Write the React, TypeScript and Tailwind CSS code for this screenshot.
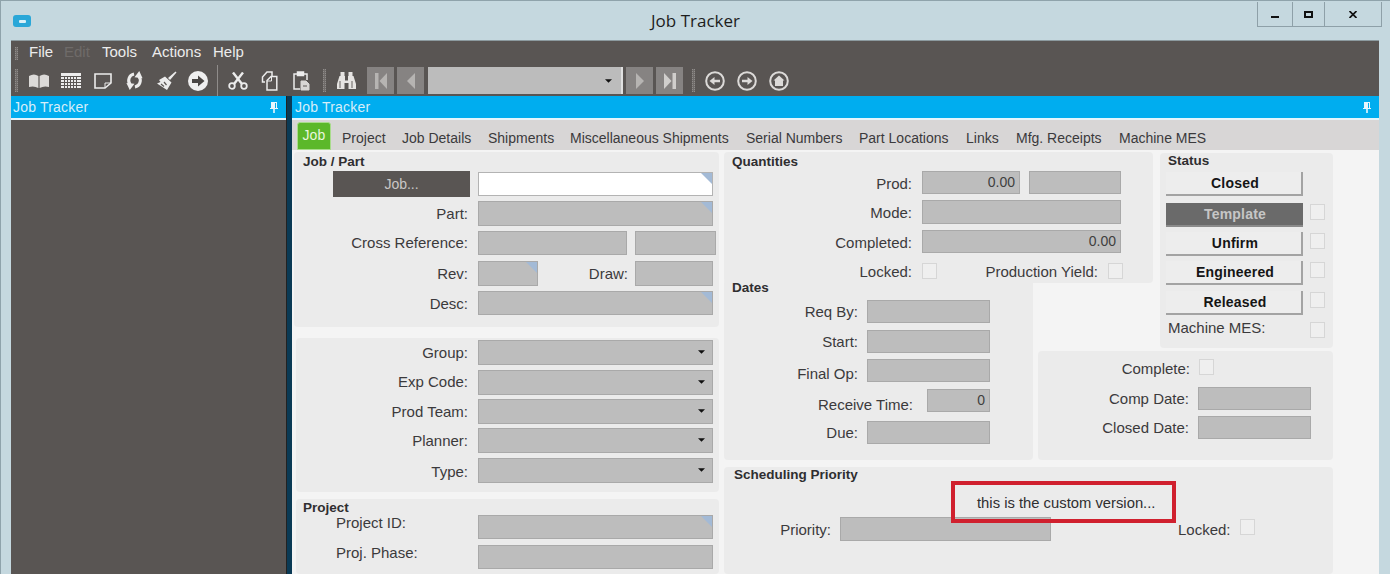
import React from "react";

const Label = ({ w, children, cls = "" }: { w: string; children: React.ReactNode; cls?: string }) => (
  <span className={`${w} ${cls} shrink-0 text-right whitespace-nowrap text-[15px] leading-none text-[#3b3a3c]`}>{children}</span>
);

const Corner = () => (
  <svg viewBox="0 0 10 10" className="absolute right-0 top-0 w-[11px] h-[11px]">
    <polygon points="0,0 10,0 10,10" fill="#a3bad6" />
  </svg>
);

const Field = ({
  w,
  h = "h-[24px]",
  ml = "ml-[10px]",
  corner,
  value,
  drop,
}: {
  w: string;
  h?: string;
  ml?: string;
  corner?: boolean;
  value?: string;
  drop?: boolean;
}) => (
  <div className={`${w} ${h} ${ml} relative shrink-0 bg-[#bdbdbd] border border-[#a9a9a9] flex items-center justify-end pr-[4px] text-[14px] text-[#3f3f3f]`}>
    {value}
    {corner && <Corner />}
    {drop && (
      <svg viewBox="0 0 8 4" className="w-[7px] h-[4px] mr-[3px]">
        <polygon points="0,0 8,0 4,4" fill="#111" />
      </svg>
    )}
  </div>
);

const Check = ({ ml = "ml-[10px]", cls = "" }: { ml?: string; cls?: string }) => (
  <div className={`${ml} ${cls} w-[15px] h-[16px] shrink-0 bg-[#efefef] border border-[#d6d6d6]`} />
);

const Panel = ({ cls, children }: { cls: string; children: React.ReactNode }) => (
  <div className={`${cls} bg-[#ebebeb] rounded-[4px]`}>{children}</div>
);

const Title = ({ children, cls = "" }: { children: React.ReactNode; cls?: string }) => (
  <div className={`${cls} font-bold text-[13.5px] leading-none text-[#2f2e30] whitespace-nowrap`}>{children}</div>
);

const Grip = ({ cls }: { cls: string }) => (
  <div className={`${cls} w-[3px] shrink-0 border-x border-dotted border-[#8f8c8a] bg-[#6f6b69]`} />
);

const I = "#ececec";

const Book = () => (
  <svg viewBox="0 0 20 15" className="ml-[11px] w-[20px] h-[15px] shrink-0">
    <path d="M0 3 Q5 0 9.4 3 V15 Q5 12.5 0 14Z M10.6 3 Q15 0 20 3 V14 Q15 12.5 10.6 15Z" fill="#dcdad8" />
  </svg>
);
const Calendar = () => (
  <svg viewBox="0 0 20 15" className="ml-[12px] w-[20px] h-[15px] shrink-0">
    <rect width="20" height="15" fill={I} />
    <g stroke="#5a5654" strokeWidth="1">
      <path d="M0 3.5H20M0 6.5H20M0 9.5H20M0 12.5H20M3.5 3V15M6.5 3V15M9.5 3V15M12.5 3V15M15.5 3V15" />
    </g>
  </svg>
);
const Note = () => (
  <svg viewBox="0 0 18 16" className="ml-[13px] w-[18px] h-[16px] shrink-0" fill="none" stroke={I} strokeWidth="1.6">
    <path d="M1 1H17V10L11 15H1Z" />
    <path d="M11 15V10H17" strokeWidth="1" />
  </svg>
);
const Refresh = () => (
  <svg viewBox="0 0 20 20" className="ml-[13px] w-[19px] h-[19px] shrink-0" fill="none" stroke={I} strokeWidth="3.2">
    <path d="M9.5 3.2A7 7 0 0 0 5.5 14.5" />
    <path d="M14.5 5.5A7 7 0 0 1 10.5 16.8" />
    <path d="M1.5 12.5L10 13.5L5 20Z M10 6.5L18.5 7.5L15 0Z" fill={I} stroke="none" />
  </svg>
);
const Broom = () => (
  <svg viewBox="0 0 21 20" className="ml-[12px] w-[21px] h-[20px] shrink-0">
    <path d="M12 7L19.5 0.5L20.5 1.5L14 9Z" fill={I} />
    <path d="M9 5.5L15.5 11.5L11 19L1 12.5L4.5 11L3 9Z" fill={I} />
    <path d="M5 13L8 15.5M8 11L10.5 14" stroke="#5a5654" strokeWidth="1.2" />
  </svg>
);
const ArrowCircle = () => (
  <svg viewBox="0 0 20 20" className="ml-[11px] w-[20px] h-[20px] shrink-0">
    <circle cx="10" cy="10" r="10" fill="#efefef" />
    <path d="M4 8H10V4.5L16.5 10L10 15.5V12H4Z" fill="#494644" />
  </svg>
);
const Scissors = () => (
  <svg viewBox="0 0 20 18" className="ml-[10px] w-[20px] h-[18px] shrink-0" fill="none" stroke={I}>
    <circle cx="4" cy="14" r="2.8" strokeWidth="1.8" />
    <circle cx="16" cy="14" r="2.8" strokeWidth="1.8" />
    <path d="M6 12L15 0.5M14 12L5 0.5" strokeWidth="2.4" />
  </svg>
);
const Copy = () => (
  <svg viewBox="0 0 17 20" className="ml-[13px] w-[17px] h-[20px] shrink-0" fill="none" stroke={I} strokeWidth="1.5">
    <path d="M4 11H1.5V6L6 1H11V5" />
    <path d="M6 9.5L10 5.5H15.8V19H6Z" />
    <path d="M6 10H10.5V5.5" strokeWidth="1" />
  </svg>
);
const Paste = () => (
  <svg viewBox="0 0 17 20" className="ml-[15px] w-[17px] h-[20px] shrink-0" fill="none" stroke={I} strokeWidth="1.5">
    <path d="M7 18H1V3H14V9" />
    <rect x="4.5" y="1" width="6" height="3.5" fill={I} />
    <path d="M8 10H13L16 13V19H8Z" fill="#d8d6d4" stroke="#d8d6d4" strokeWidth="1" />
    <path d="M10 15H14" stroke="#5a5654" strokeWidth="1" />
  </svg>
);
const Binoculars = () => (
  <svg viewBox="0 0 19 17" className="ml-[11px] w-[19px] h-[17px] shrink-0">
    <path d="M3.5 0H7.5V4H8V8.5H11V4H11.5V0H15.5V4H16.5L19 12V17H11.5V11H7.5V17H0V12L2.5 4H3.5Z" fill="#e6e4e2" />
    <path d="M3 9V16M15 9V16" stroke="#8b8886" strokeWidth="1.4" />
  </svg>
);

const NavBtn = ({ ml, kind }: { ml: string; kind: "first" | "prev" | "next" | "last" }) => (
  <div className={`${ml} w-[27px] h-[27px] shrink-0 bg-[#868382] flex items-center justify-center`}>
    <svg viewBox="0 0 14 16" className="w-[14px] h-[16px]">
      {kind === "first" && <path d="M1 0H4.5V16H1Z M13 0V16L5.5 8Z" fill="#b6b4b2" />}
      {kind === "prev" && <path d="M11 0V16L3 8Z" fill="#b6b4b2" />}
      {kind === "next" && <path d="M3 0V16L11 8Z" fill="#b6b4b2" />}
      {kind === "last" && <path d="M1 0V16L8.5 8Z M9.5 0H13V16H9.5Z" fill="#d0cecc" />}
    </svg>
  </div>
);

const CircleNav = ({ ml, children }: { ml: string; children: React.ReactNode }) => (
  <svg viewBox="0 0 20 20" className={`${ml} w-[20px] h-[20px] shrink-0`}>
    <circle cx="10" cy="10" r="8.8" fill="none" stroke="#dcdad8" strokeWidth="2" />
    {children}
  </svg>
);

const Pin = ({ cls = "" }: { cls?: string }) => (
  <svg viewBox="0 0 8 11" className={`${cls} w-[8px] h-[11px] shrink-0`}>
    <path d="M1 0H7V6H8V7H4.8V11H3.2V7H0V6H1Z M5 1V6H6V1Z" fill="#e6f6fd" fillRule="evenodd" />
  </svg>
);

const StatusBtn = ({ label, active }: { label: string; active?: boolean }) =>
  active ? (
    <div className="w-[137px] h-[24px] pl-[1px] bg-[#6a6a6a] border-b-2 border-[#8a8a8a] flex items-center justify-center font-bold text-[14px] tracking-[0.2px] text-[#c6c6c6]">
      {label}
    </div>
  ) : (
    <div className="w-[137px] h-[24px] pl-[3px] pt-[1px] bg-[#ededed] border-r-2 border-b-2 border-[#a3a3a3] flex items-center justify-center font-bold text-[14px] tracking-[0.2px] text-[#151515]">
      {label}
    </div>
  );

const tabs = [
  ["Project", "w-[60px]"],
  ["Job Details", "w-[86px]"],
  ["Shipments", "w-[82px]"],
  ["Miscellaneous Shipments", "w-[176px]"],
  ["Serial Numbers", "w-[113px]"],
  ["Part Locations", "w-[107px]"],
  ["Links", "w-[50px]"],
  ["Mfg. Receipts", "w-[103px]"],
  ["Machine MES", "w-[90px]"],
];

const menu = [
  ["File", "w-[35px]", "text-[#ececec]"],
  ["Edit", "w-[38px]", "text-[#6f6b69]"],
  ["Tools", "w-[50px]", "text-[#ececec]"],
  ["Actions", "w-[61px]", "text-[#ececec]"],
  ["Help", "w-[40px]", "text-[#ececec]"],
];

const selects = [
  ["Group:", "mt-[2px]", ""],
  ["Exp Code:", "mt-[5.5px]", "-mt-[2px]"],
  ["Prod Team:", "mt-[4.5px]", ""],
  ["Planner:", "mt-[4.5px]", ""],
  ["Type:", "mt-[5.5px]", "mt-[2px]"],
];

export default function App() {
  return (
    <div className="w-[1390px] h-[574px] overflow-hidden bg-[#c5d8df] border-t border-l border-[#8fa3ab] font-['Liberation_Sans',sans-serif] flex flex-col">
      {/* Title bar */}
      <div className="h-[39px] shrink-0 relative flex items-center justify-center">
        <div className="absolute left-[12px] top-[14px] w-[18px] h-[12px] rounded-[3px] bg-[#2aa7d8] flex items-center justify-center">
          <div className="w-[7px] h-[3px] rounded-[1px] bg-[#d9f0f8]" />
        </div>
        <span className="font-['Open_Sans',sans-serif] text-[17px] text-[#1d1d1d] mt-[1px]">Job Tracker</span>
        <div className="absolute left-[1256px] top-[1px] w-[125px] h-[25px] flex border-x border-b border-[#8ea0a8] text-[#111]">
          <div className="w-[35px] flex items-center justify-center border-r border-[#8ea0a8]">
            <div className="w-[8px] h-[2px] bg-[#111] mt-[5px]" />
          </div>
          <div className="w-[32px] flex items-center justify-center border-r border-[#8ea0a8]">
            <div className="w-[9px] h-[7px] border-2 border-[#111]" />
          </div>
          <div className="flex-1 flex items-center justify-center">
            <svg viewBox="0 0 8 7" className="w-[8px] h-[7px]">
              <path d="M0.5 0L7.5 7M7.5 0L0.5 7" stroke="#111" strokeWidth="1.7" />
            </svg>
          </div>
        </div>
      </div>

      <div className="ml-[10px] w-[1368px] flex-1 min-h-0 flex flex-col">
        {/* Menu bar */}
        <div className="h-[25px] shrink-0 bg-[#595553] flex items-center border-t border-[#8c9a9f]">
          <Grip cls="ml-[4px] h-[13px]" />
          <div className="ml-[11px] -mt-[3px] flex text-[15px] leading-none">
            {menu.map(([t, w, c]) => (
              <span key={t} className={`${w} ${c}`}>
                {t}
              </span>
            ))}
          </div>
        </div>

        {/* Toolbar */}
        <div className="h-[31px] shrink-0 bg-[#595553] flex items-center">
          <Grip cls="ml-[4px] h-[23px]" />
          <Book />
          <Calendar />
          <Note />
          <Refresh />
          <Broom />
          <ArrowCircle />
          <div className="ml-[9px] w-[1px] h-[31px] bg-[#8f8c8a] shrink-0" />
          <Scissors />
          <Copy />
          <Paste />
          <Grip cls="ml-[13px] h-[23px]" />
          <Binoculars />
          <NavBtn ml="ml-[11px]" kind="first" />
          <NavBtn ml="ml-[3px]" kind="prev" />
          <div className="ml-[4px] w-[195px] h-[27px] shrink-0 bg-[#bcbcbc] border-r-2 border-[#e0e0e0] flex items-center justify-end pr-[9px]">
            <svg viewBox="0 0 8 4" className="w-[7px] h-[4px]">
              <polygon points="0,0 8,0 4,4" fill="#111" />
            </svg>
          </div>
          <NavBtn ml="ml-[3px]" kind="next" />
          <NavBtn ml="ml-[3px]" kind="last" />
          <Grip cls="ml-[9px] h-[23px]" />
          <CircleNav ml="ml-[10px]">
            <path d="M15 8.7H9.5V6L4.5 10L9.5 14V11.3H15Z" fill="#dcdad8" />
          </CircleNav>
          <CircleNav ml="ml-[12px]">
            <path d="M5 8.7H10.5V6L15.5 10L10.5 14V11.3H5Z" fill="#dcdad8" />
          </CircleNav>
          <CircleNav ml="ml-[12px]">
            <path d="M10 4.5L15.5 9.5H14V15H6V9.5H4.5Z" fill="#dcdad8" />
          </CircleNav>
        </div>

        {/* Docked panes */}
        <div className="flex-1 min-h-0 flex">
          {/* Left pane */}
          <div className="w-[275px] shrink-0 flex flex-col bg-[#595553]">
            <div className="h-[24px] shrink-0 bg-[#00adef] border-b-2 border-[#e4f5fc] flex items-center pl-[2px] pr-[8px] justify-between">
              <span className="text-[14px] tracking-[0.2px] text-[#d6eef9]">Job Tracker</span>
              <Pin />
            </div>
          </div>
          <div className="w-[6px] shrink-0 bg-[#0a3a55] border-l border-[#222]" />

          {/* Right pane */}
          <div className="flex-1 min-w-0 flex flex-col bg-[#f4f4f4]">
            <div className="h-[24px] shrink-0 bg-[#00adef] border-b-2 border-[#e4f5fc] flex items-center pl-[3px] pr-[8px] justify-between">
              <span className="text-[14px] tracking-[0.2px] text-[#d6eef9]">Job Tracker</span>
              <Pin />
            </div>

            {/* Tabs */}
            <div className="h-[30px] shrink-0 bg-[#d8d6d6] flex items-end pl-[5px]">
              <div className="w-[34px] h-[28px] pb-[2px] rounded-t-[3px] bg-[#5cb82a] border border-[#a9dc8c] flex items-center justify-center text-[14px] text-[#e8f6de] tracking-[0.2px]">
                Job
              </div>
              <div className="ml-[11px] h-[28px] pt-[4px] flex items-center text-[14px] text-[#3b3a3c]">
                {tabs.map(([t, w]) => (
                  <span key={t} className={`${w} whitespace-nowrap`}>
                    {t}
                  </span>
                ))}
              </div>
            </div>

            {/* Form */}
            <div className="flex-1 min-h-0 flex pl-[2px] pt-[2px]">
              {/* Left column */}
              <div className="w-[425px] shrink-0 flex flex-col">
                <Panel cls="h-[175px] shrink-0 flex flex-col">
                  <Title cls="h-[20px] pl-[9px] pt-[3px]">Job / Part</Title>
                  <div className="h-[24px] flex items-center">
                    <div className="ml-[39px] w-[137px] h-[26px] bg-[#595553] flex items-center justify-center text-[14px] text-[#c9c7c6]">
                      Job...
                    </div>
                    <div className="ml-[8px] w-[235px] h-[24px] relative bg-white border border-[#b3b3b3]">
                      <Corner />
                    </div>
                  </div>
                  <div className="mt-[5px] flex items-center">
                    <Label w="w-[174px]">Part:</Label>
                    <Field w="w-[235px]" h="h-[25px]" corner />
                  </div>
                  <div className="mt-[5px] flex items-center">
                    <Label w="w-[174px]" cls="-mt-[2px]">Cross Reference:</Label>
                    <Field w="w-[149px]" />
                    <Field w="w-[81px]" ml="ml-[8px]" />
                  </div>
                  <div className="mt-[6px] flex items-center">
                    <Label w="w-[174px]">Rev:</Label>
                    <Field w="w-[60px]" h="h-[25px]" corner />
                    <Label w="w-[90px]">Draw:</Label>
                    <Field w="w-[78px]" ml="ml-[7px]" h="h-[25px]" />
                  </div>
                  <div className="mt-[5px] flex items-center">
                    <Label w="w-[174px]">Desc:</Label>
                    <Field w="w-[235px]" corner />
                  </div>
                </Panel>

                <Panel cls="ml-[2px] mt-[11px] h-[154px] shrink-0 flex flex-col">
                  {selects.map(([t, m, lc]) => (
                    <div key={t} className={`${m} flex items-center`}>
                      <Label w="w-[172px]" cls={lc}>{t}</Label>
                      <Field w="w-[235px]" h="h-[24.5px]" drop />
                    </div>
                  ))}
                </Panel>

                <Panel cls="ml-[2px] mt-[7px] flex-1 flex flex-col">
                  <Title cls="h-[16px] pl-[7px] pt-[2px]">Project</Title>
                  <div className="flex items-start">
                    <Label w="w-[172px]" cls="!text-left pl-[40px]">Project ID:</Label>
                    <Field w="w-[235px]" corner />
                  </div>
                  <div className="mt-[6px] flex items-start">
                    <Label w="w-[172px]" cls="!text-left pl-[40px]">Proj. Phase:</Label>
                    <Field w="w-[235px]" />
                  </div>
                </Panel>
              </div>

              {/* Middle and right area */}
              <div className="ml-[5px] w-[609px] shrink-0 grid grid-cols-[309px_5px_115px_7px_173px] grid-rows-[127px_72px_109px_1fr]">
                <Panel cls="col-start-1 col-span-3 row-start-1 h-[131px] flex flex-col">
                  <Title cls="h-[19px] pl-[8px] pt-[3px]">Quantities</Title>
                  <div className="flex items-center">
                    <Label w="w-[188px]" cls="mt-[2px]">Prod:</Label>
                    <Field w="w-[98px]" h="h-[23px]" value="0.00" />
                    <Field w="w-[92px]" h="h-[23px]" ml="ml-[9px]" />
                  </div>
                  <div className="mt-[6px] flex items-center">
                    <Label w="w-[188px]">Mode:</Label>
                    <Field w="w-[199px]" />
                  </div>
                  <div className="mt-[6px] flex items-center">
                    <Label w="w-[188px]" cls="mt-[2px]">Completed:</Label>
                    <Field w="w-[199px]" h="h-[23px]" value="0.00" />
                  </div>
                  <div className="mt-[9px] flex items-center">
                    <Label w="w-[188px]" cls="mt-[2px]">Locked:</Label>
                    <Check />
                    <Label w="w-[161px]" cls="mt-[2px]">Production Yield:</Label>
                    <Check />
                  </div>
                </Panel>

                <Panel cls="col-start-1 row-start-2 row-span-2 relative z-10 flex flex-col">
                  <Title cls="h-[21px] pl-[8px] pt-[2px]">Dates</Title>
                  <div className="flex items-center">
                    <Label w="w-[134px]">Req By:</Label>
                    <Field w="w-[123px]" h="h-[23px]" ml="ml-[9px]" />
                  </div>
                  <div className="mt-[7px] flex items-center">
                    <Label w="w-[134px]">Start:</Label>
                    <Field w="w-[123px]" h="h-[23px]" ml="ml-[9px]" />
                  </div>
                  <div className="mt-[6px] flex items-center">
                    <Label w="w-[134px]" cls="mt-[5px]">Final Op:</Label>
                    <Field w="w-[123px]" h="h-[23px]" ml="ml-[9px]" />
                  </div>
                  <div className="mt-[7px] flex items-center">
                    <Label w="w-[189px]" cls="mt-[8px]">Receive Time:</Label>
                    <Field w="w-[63px]" h="h-[23px]" ml="ml-[14px]" value="0" />
                  </div>
                  <div className="mt-[9px] flex items-center">
                    <Label w="w-[134px]">Due:</Label>
                    <Field w="w-[123px]" h="h-[23px]" ml="ml-[9px]" />
                  </div>
                </Panel>

                <Panel cls="col-start-5 row-start-1 row-span-2 h-[195px] mt-[1px] flex flex-col pl-[6px]">
                  <Title cls="h-[19px] pl-[2px] pt-[1px]">Status</Title>
                  <StatusBtn label="Closed" />
                  <div className="mt-[7px] flex items-center">
                    <StatusBtn label="Template" active />
                    <Check ml="ml-[7px]" cls="-mt-[6px]" />
                  </div>
                  <div className="mt-[5px] flex items-center">
                    <StatusBtn label="Unfirm" />
                    <Check ml="ml-[7px]" cls="-mt-[6px]" />
                  </div>
                  <div className="mt-[5px] flex items-center">
                    <StatusBtn label="Engineered" />
                    <Check ml="ml-[7px]" cls="-mt-[6px]" />
                  </div>
                  <div className="mt-[6px] flex items-center">
                    <StatusBtn label="Released" />
                    <Check ml="ml-[7px]" cls="-mt-[6px]" />
                  </div>
                  <div className="mt-[7px] flex items-center">
                    <Label w="w-[144px]" cls="!text-left pl-[2px] -mt-[5px]">Machine MES:</Label>
                    <Check ml="ml-0" />
                  </div>
                </Panel>

                <Panel cls="col-start-3 col-span-3 row-start-3 flex flex-col">
                  <div className="mt-[7px] flex items-center">
                    <Label w="w-[152px]" cls="mt-[3px]">Complete:</Label>
                    <Check ml="ml-[9px]" />
                  </div>
                  <div className="mt-[11px] flex items-center">
                    <Label w="w-[151px]">Comp Date:</Label>
                    <Field w="w-[113px]" h="h-[23px]" ml="ml-[9px]" />
                  </div>
                  <div className="mt-[6px] flex items-center">
                    <Label w="w-[151px]">Closed Date:</Label>
                    <Field w="w-[113px]" h="h-[23px]" ml="ml-[9px]" />
                  </div>
                </Panel>

                <Panel cls="col-start-1 col-span-5 row-start-4 mt-[7px] relative flex flex-col">
                  <Title cls="h-[50px] pl-[10px] pt-[1px]">Scheduling Priority</Title>
                  <div className="flex items-center">
                    <Label w="w-[107px]" cls="mt-[1px]">Priority:</Label>
                    <Field w="w-[211px]" ml="ml-[9px]" />
                    <Label w="w-[52px]" cls="ml-[127px] mt-[1px] !text-left">Locked:</Label>
                    <Check cls="-mt-[4px]" />
                  </div>
                  <div className="absolute left-[227px] top-[14px] w-[225px] h-[42px] pt-[2px] border-[4px] border-[#d0202e] flex items-center pl-[22px] text-[14.8px] text-[#2f2e30] whitespace-nowrap">
                    this is the custom version...
                  </div>
                </Panel>
              </div>
            </div>
          </div>
        </div>
      </div>
    </div>
  );
}
